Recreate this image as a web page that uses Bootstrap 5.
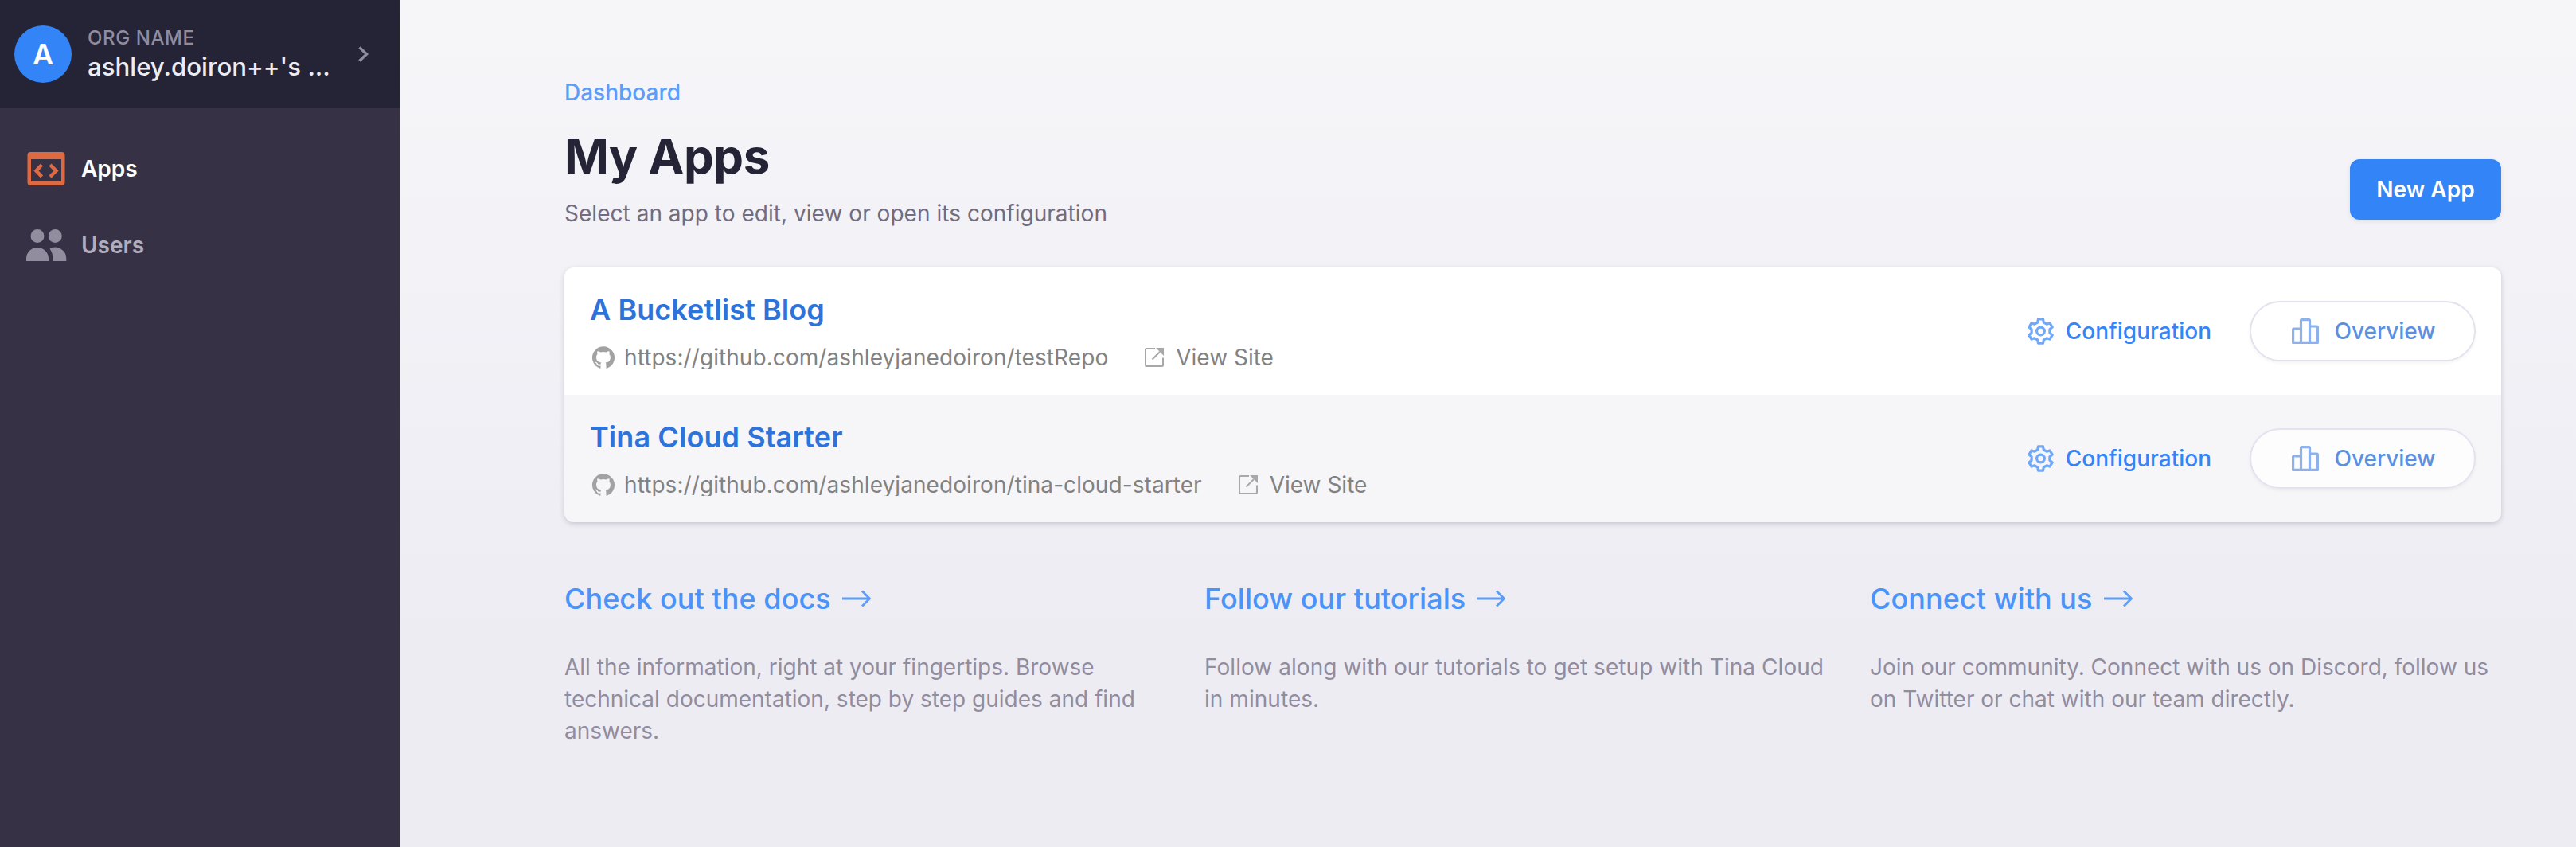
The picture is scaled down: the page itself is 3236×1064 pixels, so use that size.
<!DOCTYPE html>
<html lang="en">
<head>
<meta charset="utf-8">
<title>My Apps</title>
<link href="https://cdn.jsdelivr.net/npm/bootstrap@5.3.0/dist/css/bootstrap.min.css" rel="stylesheet">
<style>
body{font-family:Inter,"Liberation Sans",sans-serif;font-size:28px;line-height:40px;height:1064px;overflow:hidden;color:#716c7f}
a{text-decoration:none}
svg{flex:none;display:block}
.side{width:502px;background:#363145}
.org{height:136px;background:#252336;padding:0 38px 0 18px}
.avatar{width:72px;height:72px;background:#3385f7;font-size:36px;font-weight:600}
.org-text{margin-left:20px;padding-top:2px}
.org-label{font-size:24px;line-height:30px;color:#918c9e;font-weight:500;letter-spacing:.6px}
.org-name{font-size:31.2px;line-height:42px;color:#edecf3;font-weight:500;width:308px}
.side-nav{padding:28px 32px}
.side-link{height:96px;gap:18px;font-weight:600;color:#b2adbe}
.side-link.active{color:#fff}
.main{background:linear-gradient(to bottom,#f6f6f9,#edecf3 75%,#edecf3);padding:96px 94px 0 207px}
.crumb{color:#5c9df9;font-weight:500}
h1{font-size:60px;line-height:60px;font-weight:700;letter-spacing:-.007em;color:#252336;margin:30px 0 22px}
.lede{letter-spacing:.03px}
.btn-new{width:190px;height:76px;border-radius:12px;background:#3385f7;color:#fff;font-size:28px;font-weight:600;padding:0;margin-bottom:12px;box-shadow:0 2px 6px rgba(0,0,0,.08)}
.app-list{margin-top:48px;border-radius:12px;overflow:hidden;box-shadow:0 2px 6px rgba(37,35,54,.2)}
.app-row{height:160px;padding:0 32px;background:#fff}
.app-row+.app-row{background:#f6f6f9}
.app-title{font-size:36px;line-height:40px;font-weight:600;color:#2c74dc;letter-spacing:.07px}
.app-meta{color:#828282;line-height:28px;height:28px;margin-top:26px}
.url-text{height:28px;overflow:hidden;letter-spacing:.07px}
.ico-gh{margin:0 10px 0 1px}
.ico-ext{margin:0 15px 0 46px}
.conf{color:#3385f7;font-weight:500;gap:15px;margin-right:48px}
.btn-over{width:284px;height:76px;border:2px solid #e4e2ef;border-radius:38px;background:rgba(255,255,255,.8);color:#5a90e2;font-size:28px;font-weight:500;gap:19px;padding:0 0 0 3px;box-shadow:0 2px 4px rgba(0,0,0,.05)}
.help{margin-top:76px}
.help h2{font-size:36px;line-height:40px;font-weight:500;color:#4a93f9;margin:0 0 46px;gap:14px;letter-spacing:.05px}
.help p{color:#918c9e;margin:0}
.c1{width:804px}.c2{width:836px}.c3{width:780px}
.c2 p{letter-spacing:.05px}
</style>
</head>
<body class="d-flex">
<svg width="0" height="0" class="position-absolute">
<symbol id="gh" viewBox="0 0 24 24"><path d="M12 .3a12 12 0 0 0-3.800 23.400c.6.1.8-.3.8-.6v-2c-3.300.7-4-1.600-4-1.600-.6-1.400-1.400-1.800-1.400-1.800-1-.7.1-.7.1-.7 1.200 0 1.900 1.200 1.900 1.200 1 1.800 2.800 1.300 3.500 1 0-.8.4-1.300.7-1.600-2.700-.3-5.500-1.300-5.500-6 0-1.200.5-2.300 1.300-3.100-.2-.4-.6-1.600 0-3.200 0 0 1-.3 3.400 1.200a11.500 11.500 0 0 1 6 0c2.300-1.500 3.300-1.200 3.300-1.200.6 1.600.2 2.800 0 3.200.9.8 1.300 1.900 1.300 3.200 0 4.600-2.800 5.600-5.500 5.900.5.4.9 1 .9 2.200v3.300c0 .3.1.7.8.6A12 12 0 0 0 12 .3"/></symbol>
<symbol id="ext" viewBox="0 0 24 24"><path d="M13 1H2.500Q1 1 1 2.500V21.500Q1 23 2.500 23H21.500Q23 23 23 21.500V12.500M9.500 14.500L19 5" fill="none" stroke="currentColor" stroke-width="2"/><path d="M14 0H24V10z"/></symbol>
<symbol id="gear" viewBox="-16.5 -17 33 34"><g fill="none" stroke="currentColor" stroke-width="3.200" stroke-linejoin="round"><path d="M-3.800-11L-3-15.200H3L3.800-11L7.600-8.800L11.500-10.100L14.700-4.900L11.400-2.200V2.200L14.700 4.900L11.500 10.100L7.600 8.800L3.800 11L3 15.200H-3L-3.800 11L-7.600 8.800L-11.500 10.100L-14.700 4.900L-11.400 2.200V-2.200L-14.700-4.900L-11.500-10.100L-7.600-8.800z"/><circle r="4.900"/></g></symbol>
<symbol id="bars" viewBox="0 0 34 32"><path d="M1.600 30.400V14Q1.600 13 2.600 13H11.500V2.600Q11.500 1.600 12.500 1.600H21.500Q22.500 1.600 22.500 2.600V10H31.400Q32.400 10 32.400 11V30.400zM11.500 13V30M22.500 10V30" fill="none" stroke="currentColor" stroke-width="3.200" stroke-linejoin="round"/></symbol>
<symbol id="arrow" viewBox="0 0 36 22"><path d="M0 11H34M25 1.500L34.500 11L25 20.500" fill="none" stroke="currentColor" stroke-width="2.800" stroke-linejoin="round"/></symbol>
</svg>
<aside class="side flex-shrink-0 h-100">
  <div class="org d-flex align-items-center">
    <div class="avatar rounded-circle text-white d-flex align-items-center justify-content-center">A</div>
    <div class="org-text">
      <div class="org-label">ORG NAME</div>
      <div class="org-name text-nowrap">ashley.doiron++'s ...</div>
    </div>
    <svg class="ms-auto" width="14" height="20" viewBox="0 0 14 20" fill="none" stroke="#918c9e" stroke-width="3.500"><path d="M1.500 1.500L10.500 10L1.500 18.500"/></svg>
  </div>
  <nav class="side-nav">
    <a href="#" class="side-link active d-flex align-items-center">
      <svg width="52" height="42" viewBox="0 0 52 42" fill="#dd6a41"><path fill-rule="evenodd" d="M6.500 0H45.500Q49.500 0 49.500 4V38Q49.500 42 45.500 42H6.500Q2.500 42 2.500 38V4Q2.500 0 6.500 0zM7 9V37H45V9z"/><path d="M20.500 16L13.500 23.500L20.500 31M31 16L38.500 23.500L31 31" fill="none" stroke="#dd6a41" stroke-width="4.500"/></svg>
      Apps</a>
    <a href="#" class="side-link d-flex align-items-center">
      <svg width="52" height="40" viewBox="0 0 52 40" fill="#918c9e"><circle cx="15" cy="8.500" r="8.500"/><circle cx="37.300" cy="8.500" r="8.500"/><path d="M1 40V37A14 14 0 0 1 29 37V40zM34.500 40V37Q34.500 30 30.500 24.500A14 14 0 0 1 51.300 37V40z"/></svg>
      Users</a>
  </nav>
</aside>
<main class="main flex-grow-1 h-100">
  <header class="d-flex justify-content-between align-items-end">
    <div>
      <a href="#" class="crumb d-block">Dashboard</a>
      <h1>My Apps</h1>
      <div class="lede">Select an app to edit, view or open its configuration</div>
    </div>
    <button class="btn btn-new">New App</button>
  </header>
  <section class="app-list">
    <div class="app-row d-flex align-items-center">
      <div class="flex-grow-1">
        <a href="#" class="app-title d-block">A Bucketlist Blog</a>
        <div class="app-meta d-flex align-items-center">
          <svg class="ico-gh" width="32" height="28" fill="#a2a2a2"><use href="#gh"/></svg><span class="url-text">https://github.com/ashleyjanedoiron/testRepo</span>
          <svg class="ico-ext" width="24" height="24" fill="#a8a8a8" color="#a8a8a8"><use href="#ext"/></svg><span>View Site</span>
        </div>
      </div>
      <a href="#" class="conf d-flex align-items-center"><svg width="33" height="34" color="#70a9fa"><use href="#gear"/></svg>Configuration</a>
      <button class="btn btn-over d-flex align-items-center justify-content-center"><svg width="34" height="32" color="#8cb1eb"><use href="#bars"/></svg>Overview</button>
    </div>
    <div class="app-row d-flex align-items-center">
      <div class="flex-grow-1">
        <a href="#" class="app-title d-block">Tina Cloud Starter</a>
        <div class="app-meta d-flex align-items-center">
          <svg class="ico-gh" width="32" height="28" fill="#a2a2a2"><use href="#gh"/></svg><span class="url-text">https://github.com/ashleyjanedoiron/tina-cloud-starter</span>
          <svg class="ico-ext" width="24" height="24" fill="#a8a8a8" color="#a8a8a8"><use href="#ext"/></svg><span>View Site</span>
        </div>
      </div>
      <a href="#" class="conf d-flex align-items-center"><svg width="33" height="34" color="#70a9fa"><use href="#gear"/></svg>Configuration</a>
      <button class="btn btn-over d-flex align-items-center justify-content-center"><svg width="34" height="32" color="#8cb1eb"><use href="#bars"/></svg>Overview</button>
    </div>
  </section>
  <section class="help d-flex">
    <div class="c1"><h2 class="d-flex align-items-center">Check out the docs<svg width="36" height="22" color="#5c9df9"><use href="#arrow"/></svg></h2>
      <p>All the information, right at your fingertips. Browse<br>technical documentation, step by step guides and find<br>answers.</p></div>
    <div class="c2"><h2 class="d-flex align-items-center">Follow our tutorials<svg width="36" height="22" color="#5c9df9"><use href="#arrow"/></svg></h2>
      <p>Follow along with our tutorials to get setup with Tina Cloud<br>in minutes.</p></div>
    <div class="c3"><h2 class="d-flex align-items-center">Connect with us<svg width="36" height="22" color="#5c9df9"><use href="#arrow"/></svg></h2>
      <p>Join our community. Connect with us on Discord, follow us<br>on Twitter or chat with our team directly.</p></div>
  </section>
</main>
<script src="https://cdn.jsdelivr.net/npm/bootstrap@5.3.0/dist/js/bootstrap.bundle.min.js"></script>
</body>
</html>
